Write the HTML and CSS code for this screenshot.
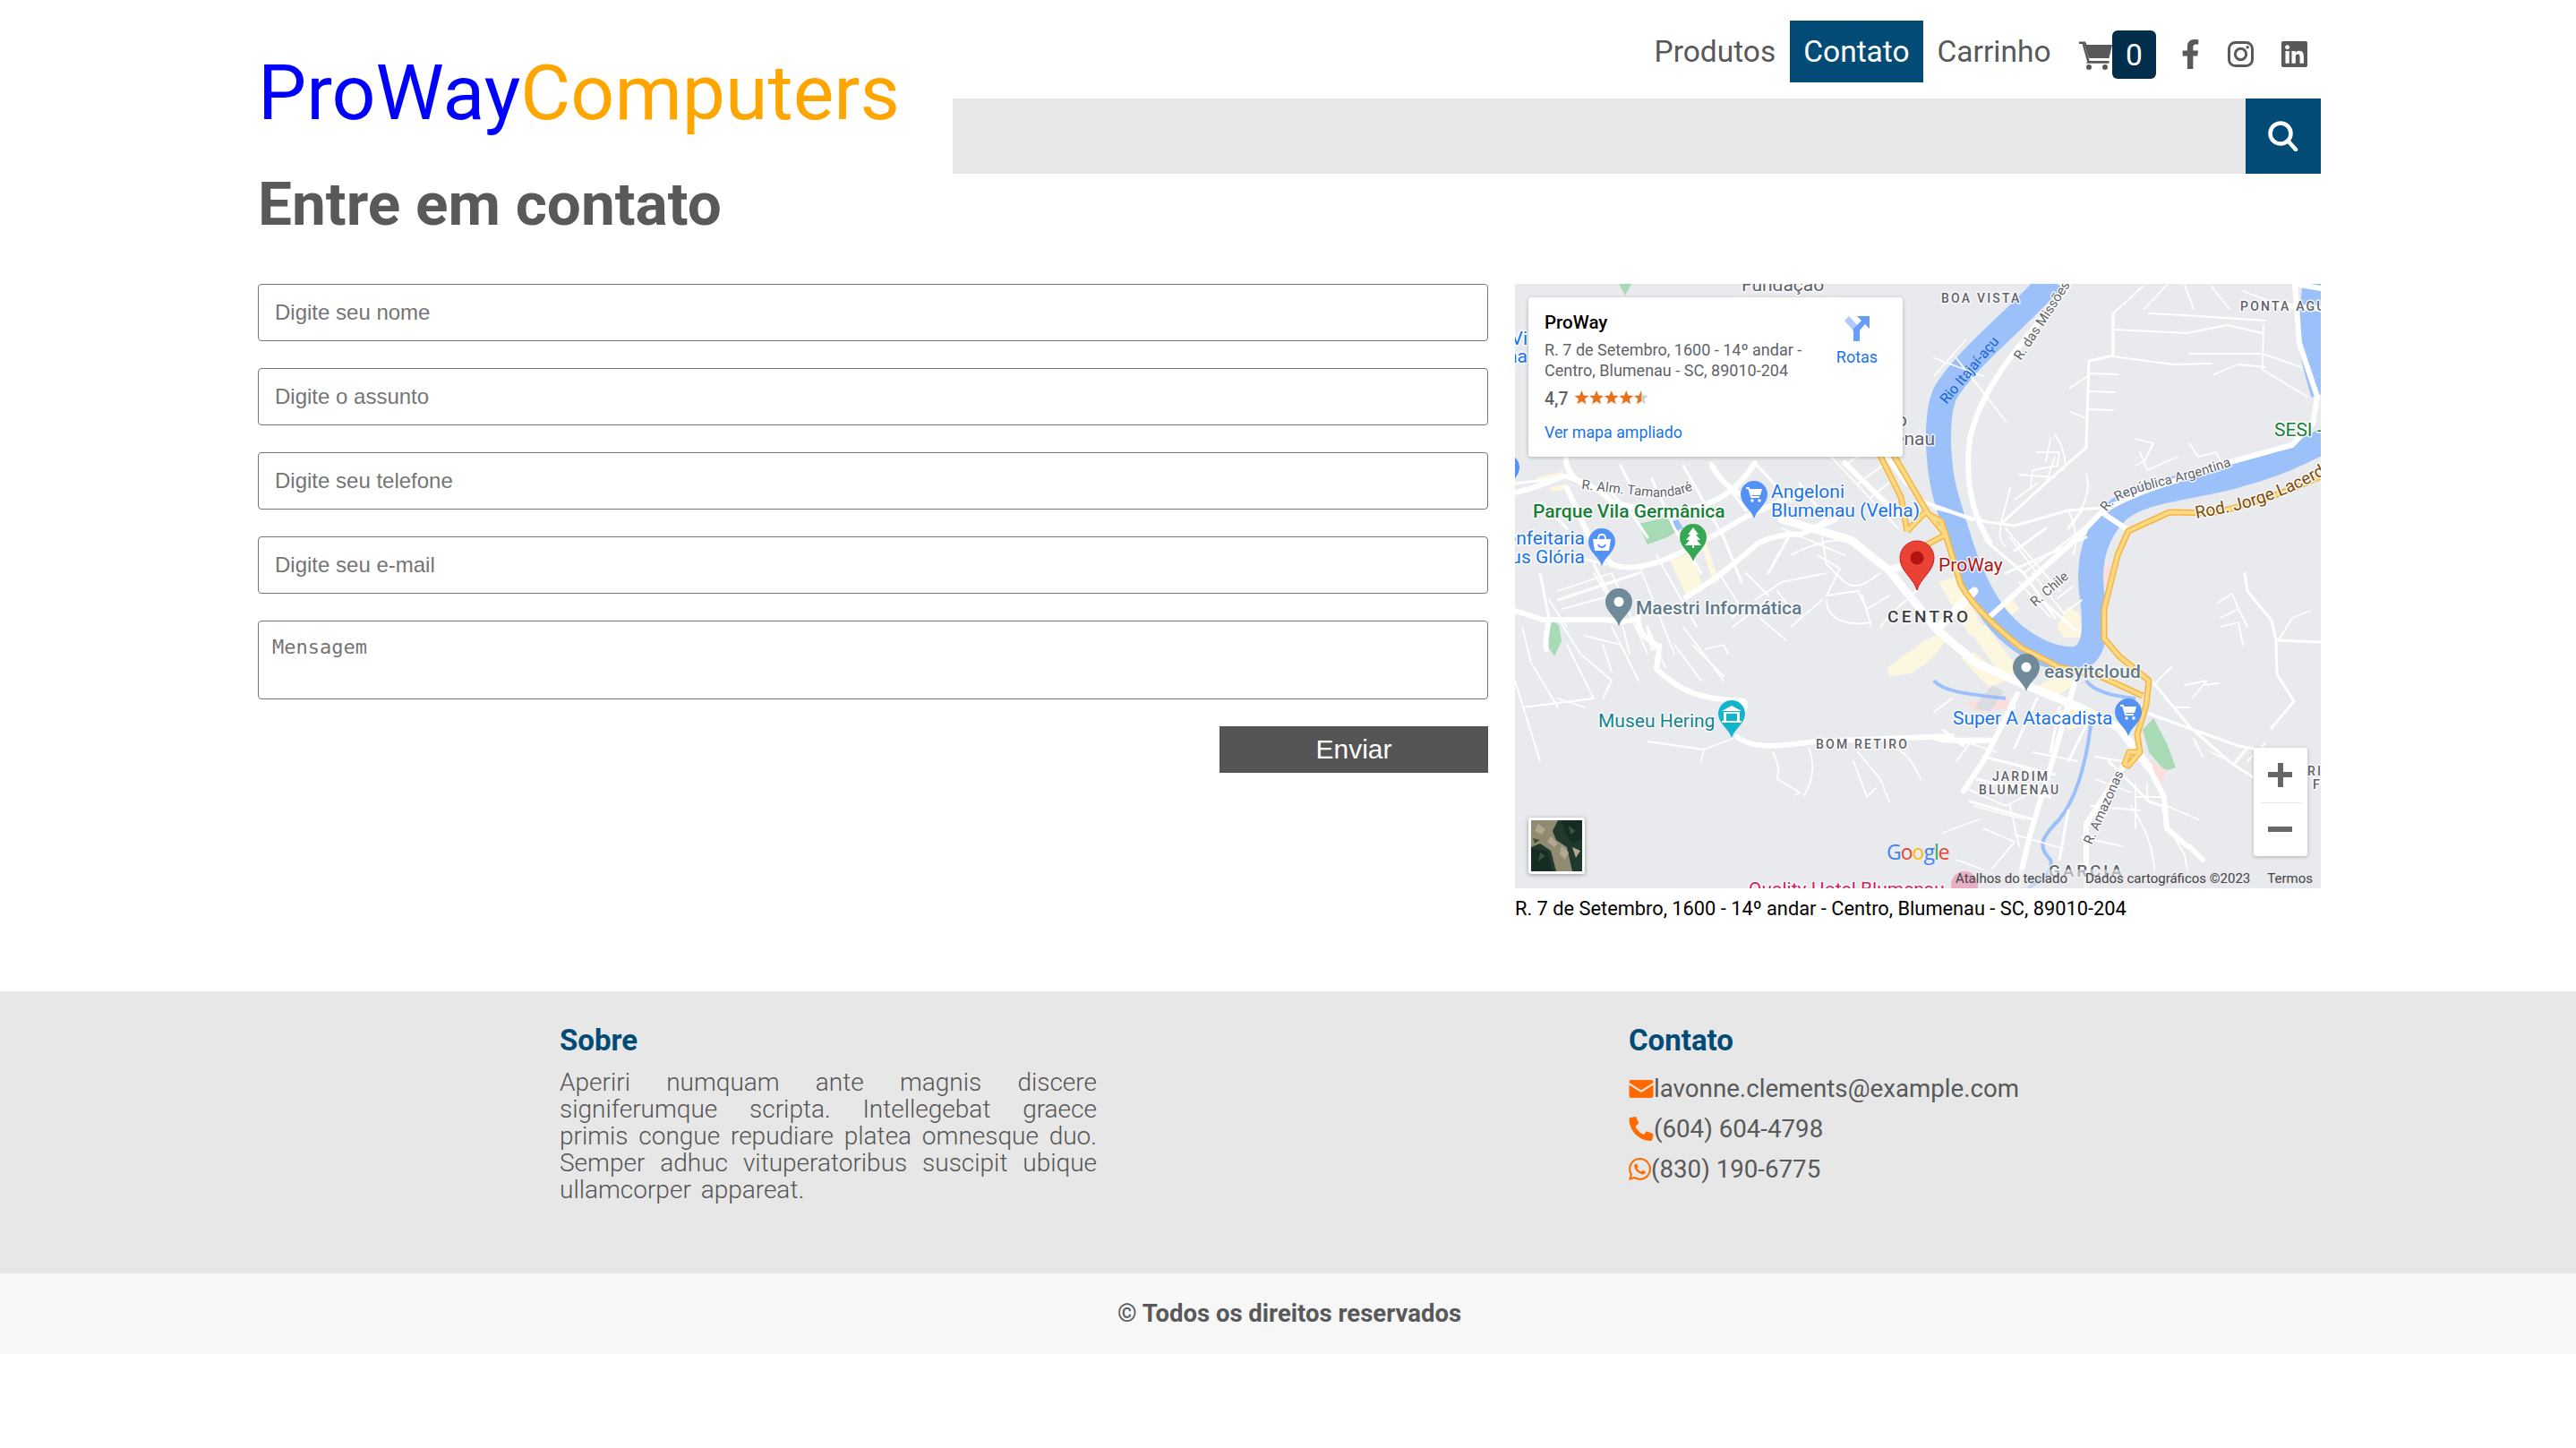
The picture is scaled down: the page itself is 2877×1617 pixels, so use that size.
FILE: index.html
```html
<!DOCTYPE html>
<html lang="pt-BR">
<head>
<meta charset="utf-8">
<title>ProWay Computers</title>
<link rel="stylesheet" href="styles.css">
</head>
<body>
<div class="wrap">
  <header class="top">
    <a class="logo"><span class="logo-a">ProWay</span><span class="logo-b">Computers</span></a>
    <div class="top-right">
      <nav class="nav">
        <a class="nav-link">Produtos</a>
        <a class="nav-link active">Contato</a>
        <a class="nav-link">Carrinho</a>
        <span class="cart">
          <svg class="cart-icon" viewBox="0 0 38 34"><path d="M1 2.5h7l1.6 3.5H38l-3.5 15H12.6l-.8 0L6.5 5H1z"/><path d="M10.5 24h24v2.8H9z"/><path d="M6.5 5l6.5 20h-2.8L4.5 5z"/><circle cx="12" cy="31" r="3"/><circle cx="30" cy="31" r="3"/></svg>
          <span class="badge">0</span>
        </span>
        <span class="social">
          <svg class="ic-f" viewBox="0 0 320 512"><path d="M279.14 288l14.22-92.66h-88.91v-60.13c0-25.35 12.42-50.06 52.24-50.06h40.42V6.26S260.43 0 225.36 0c-73.22 0-121.08 44.38-121.08 124.72v70.62H22.89V288h81.39v224h100.17V288z"/></svg>
          <svg class="ic-s" viewBox="0 0 29 29"><rect class="ig" x="1.5" y="1.5" width="26" height="26" rx="7"/><circle class="ig" cx="14.5" cy="14.5" r="6.2"/><circle cx="22.2" cy="6.8" r="1.7"/></svg>
          <svg class="ic-s" viewBox="0 0 448 448"><path transform="translate(0 -32)" d="M416 32H31.9C14.3 32 0 46.5 0 64.3v383.4C0 465.5 14.3 480 31.9 480H416c17.6 0 32-14.5 32-32.3V64.3c0-17.8-14.4-32.3-32-32.3zM135.4 416H69V202.2h66.5V416zm-33.2-243c-21.3 0-38.5-17.3-38.5-38.5S80.9 96 102.2 96c21.2 0 38.5 17.3 38.5 38.5 0 21.3-17.2 38.5-38.5 38.5zm282.1 243h-66.4V312c0-24.8-.5-56.7-34.5-56.7-34.6 0-39.9 27-39.9 54.9V416h-66.4V202.2h63.7v29.2h.9c8.9-16.8 30.6-34.5 62.9-34.5 67.2 0 79.7 44.3 79.7 101.9V416z"/></svg>
        </span>
      </nav>
      <form class="search">
        <input class="search-input" type="text" aria-label="Buscar">
        <button class="search-btn" type="button" aria-label="Buscar">
          <svg class="search-icon" viewBox="0 0 34 34"><circle cx="14" cy="14" r="11.5"/><path d="M22.5 22.5L31 32"/></svg>
        </button>
      </form>
    </div>
  </header>

  <h1 class="title">Entre em contato</h1>

  <section class="contact">
    <form class="form">
      <input class="field" type="text" placeholder="Digite seu nome">
      <input class="field" type="text" placeholder="Digite o assunto">
      <input class="field" type="text" placeholder="Digite seu telefone">
      <input class="field" type="text" placeholder="Digite seu e-mail">
      <textarea class="field area" placeholder="Mensagem"></textarea>
      <button class="send" type="button">Enviar</button>
    </form>

    <div class="map-col">
      <div class="map">
        <svg class="map-svg" viewBox="1692 317 900 675" width="900" height="675">
          <defs>
            <path id="p-tam" d="M1766 546L1845 555Q1872 556 1893 546"/>
            <path id="p-rep" d="M2353 572C2365 548 2418 546 2490 521"/>
            <path id="p-rod" d="M2453 579L2490 572C2530 563 2565 548 2600 528"/>
            <path id="pin" d="M0 27C-3 17-15 11-15 0A15 15 0 1 1 15 0C15 11 3 17 0 27Z"/>
          </defs>
          <rect class="land" x="1692" y="317" width="900" height="675"/>

          <!-- áreas -->
          <g class="park">
            <path d="M1830 585L1860 578L1878 590L1862 600L1840 608Z"/>
            <path d="M1733 693L1741 698L1744 716L1736 733L1729 722L1727 700Z"/>
            <path d="M2393 815L2405 802L2420 830L2430 857L2418 861L2400 840Z"/>
            <path d="M1808 317L1822 317L1815 330Z"/>
          </g>
          <path class="lake" d="M1866 583L1874 580L1880 590L1870 592Z"/>
          <g class="urban">
            <path d="M1865 625L1890 617L1903 660L1883 665Z"/>
            <path d="M1900 610L1906 608L1920 648L1914 652Z"/>
            <path d="M1716 533L1745 527L1748 534L1720 540Z"/>
            <path d="M1730 545L1750 540L1752 546L1733 549Z"/>
            <path d="M2108 745L2150 715L2165 708L2177 712L2155 738L2135 752L2110 755Z"/>
            <path d="M2165 650L2182 645L2215 700L2200 710Z"/>
            <path d="M2200 705L2218 698L2255 748L2238 758Z"/>
            <path d="M2297 700L2310 677L2322 685L2325 712L2305 712Z"/>
            <path d="M2190 735L2205 728L2240 760L2222 768Z"/>
            <path d="M2300 795L2325 785L2330 810L2310 815Z"/>
            <path d="M2270 770L2300 752L2320 762L2290 782Z"/>
            <path d="M2230 680L2247 667L2255 680L2240 692Z"/>
          </g>
          <g class="pink">
            <path d="M2193 785L2243 777L2245 790L2210 795Z"/>
            <path d="M2347 630L2358 632L2360 650L2350 655Z"/>
            <path d="M2397 847L2420 860L2415 875L2402 862Z"/>
          </g>
          <path class="gray-block" d="M2205 790L2225 765L2238 772L2222 795Z"/>

          <!-- rio -->
          <path class="river" d="M2292 312C2255 355 2195 400 2172 440C2160 470 2165 530 2175 560C2190 610 2200 650 2230 690C2255 720 2290 738 2318 736C2345 730 2340 690 2336 660C2332 625 2340 595 2365 570C2395 545 2450 545 2500 530C2545 518 2570 505 2600 490"/>
          <path class="river-thin" d="M2585 310L2580 365C2580 395 2588 420 2594 440"/>
          <path class="stream" d="M2160 760C2170 772 2195 775 2240 780"/>
          <path class="stream" d="M2330 760C2340 775 2370 778 2385 780"/>
          <path class="stream" d="M2335 810C2330 850 2320 890 2300 915C2280 935 2275 945 2290 960C2295 975 2275 985 2265 992"/>

          <!-- ruas finas -->
          <g class="r4">
            <path d="M2393 320L2360 350M2420 318L2395 345M2440 318L2450 345M2470 320L2490 345M2505 325L2545 340M2400 350L2440 352L2530 358"/>
            <path d="M2360 368L2443 372L2487 363L2527 372"/>
            <path d="M2528 363L2527 413L2577 443M2445 395L2527 395L2570 410"/>
            <path d="M2360 398L2427 407L2470 406M2473 418L2500 407L2530 410"/>
            <path d="M2333 417L2365 418M2332 437L2362 438M2330 457L2360 458M2312 433L2332 420M2312 460L2330 467"/>
            <path d="M2295 485C2305 500 2310 520 2303 525M2290 490L2285 515M2295 510L2285 540"/>
            <path d="M2275 505L2300 505L2298 520L2270 525L2268 545M2255 530L2295 533M2250 558L2275 540"/>
            <path d="M2385 490L2405 495L2395 515L2385 520M2390 505L2398 525L2432 510M2445 495L2455 510L2475 505L2480 515"/>
            <path d="M2160 420L2195 380M2185 400L2240 470M2160 400L2215 420M2245 545C2240 570 2225 600 2240 610"/>
            <path d="M2330 530C2335 545 2330 565 2310 590M2310 570C2320 590 2320 610 2315 620"/>
            <path d="M2290 630L2330 595M2260 640L2340 580M2300 660L2240 590M2245 600L2275 640"/>
            <path d="M2270 640L2305 685M2255 650L2290 690M2298 668L2315 655M2305 685L2325 670"/>
            <path d="M2045 510L2120 590M2060 520L2095 495M2075 540L2105 518M2090 555L2115 535"/>
            <path d="M2000 620C2020 610 2045 600 2060 605M1990 590L2060 620M2035 600L2040 630L2060 650C2075 660 2085 650 2100 640"/>
            <path d="M2030 620L2055 635L2040 665L2075 660L2085 680L2110 665M2080 665L2090 700M2100 700C2115 680 2130 670 2140 660"/>
            <path d="M1960 670L1990 650L2040 640M1985 660L2000 680M1935 700L1975 670M1965 690L1995 715M2000 700L2035 670"/>
            <path d="M1920 640L1945 680L1935 690M1950 640L1975 665"/>
            <path d="M1880 700L1925 760M1870 720L1900 760M1905 725L1925 720L1930 730"/>
            <path d="M1740 690L1765 730L1800 760L1790 780M1750 720L1780 780L1700 790M1700 700L1710 740L1740 790"/>
            <path d="M1692 760L1720 850M1740 780L1770 790"/>
            <path d="M1780 640L1810 690L1820 730M1800 640L1840 730M1830 630L1870 730M1850 620L1895 700M1740 660L1800 640M1745 680L1800 665M1730 670L1750 700"/>
            <path d="M1800 700L1830 760M1770 710L1810 720M1790 720L1800 750"/>
            <path d="M1840 700L1860 745M1890 720L1925 755"/>
            <path d="M1840 828L1903 837L1900 850M1903 837L1935 825"/>
            <path d="M1980 840C1990 860 1985 865 1985 870L2010 885L2005 888M2020 835C2030 860 2020 880 2015 888M2070 850L2085 890L2095 880M2075 840L2100 870L2110 895"/>
            <path d="M2110 835C2130 835 2140 860 2145 870M2040 670C2040 690 2060 700 2090 695"/>
            <path d="M2160 795L2180 780M2185 850L2200 830L2230 840M2195 880L2240 900L2260 890M2205 900L2260 915M2240 850L2290 870M2235 875L2280 880M2245 900L2255 945M2270 840L2320 850"/>
            <path d="M2250 932L2305 948M2215 925L2250 940L2225 970M2170 930L2210 915M2185 960L2225 975"/>
            <path d="M2340 845L2370 850M2340 870L2380 885M2335 900L2390 905M2325 935L2370 945M2385 890L2415 890M2398 875L2398 890M2385 875L2385 925"/>
            <path d="M2420 900L2455 915M2420 920L2440 955L2445 985M2380 900C2400 930 2410 960 2405 992"/>
            <path d="M2477 673L2493 663L2500 680L2480 690M2500 680L2510 700M2480 700L2500 695L2505 720M2545 715L2560 690L2580 682"/>
            <path d="M2440 765L2465 760L2448 780M2460 765L2478 763M2425 745L2405 765"/>
            <path d="M2430 790L2445 790M2470 840L2490 850M2450 825L2460 845M2510 850L2530 830"/>
          </g>

          <!-- ruas médias -->
          <g class="r3">
            <path d="M2360 350V397L2333 403C2332 440 2331 470 2330 500L2303 523L2270 553L2237 583"/>
            <path d="M2160 567L2220 583L2250 587L2310 570L2347 567"/>
            <path d="M2507 640L2510 660L2537 693L2542 715L2592 717M2542 715L2543 753L2562 783L2537 813"/>
            <path d="M2403 760L2447 813L2493 853L2517 868M2400 797L2500 833L2517 836M2495 853L2510 835"/>
            <path d="M1840 700L1845 725L1855 720L1850 747"/>
            <path d="M2217 603L2260 640L2295 690M2282 672L2320 705"/>
            <path d="M2330 600L2240 640M2250 615L2285 590M2310 590L2325 570"/>
            <path d="M1692 540L1750 533M1793 545L1820 570L1840 600M1720 560L1750 590M1810 520L1820 540M1845 535L1870 590L1900 640M1880 520L1925 600L1945 650M1910 517L1950 570M1960 517L2000 560"/>
            <path d="M1740 617L1793 630M1780 630L1800 670M1740 670L1800 650L1830 640M1720 640L1730 690"/>
            <path d="M2010 540L2040 580L2015 595M2000 595L1975 640"/>
            <path d="M2193 830L2227 827L2250 790M2170 815L2193 833M2215 845L2295 865M2208 870L2290 890M2200 895L2270 915"/>
            <path d="M2300 790L2290 840M2275 780L2250 835M2335 800L2310 850"/>
            <path d="M2310 905L2300 960M2355 850L2400 895L2415 900L2420 920"/>
          </g>

          <!-- ruas largas -->
          <g class="r2">
            <path d="M2310 320C2280 360 2215 420 2200 490C2195 530 2200 570 2222 605"/>
            <path d="M2563 317L2568 383L2588 443L2583 473L2560 497L2487 517C2440 535 2390 545 2347 572"/>
            <path d="M2347 572L2320 600L2223 688"/>
            <path d="M2347 572L2377 592"/>
            <path d="M1692 550C1720 545 1745 530 1750 532C1775 540 1790 550 1800 560C1830 570 1870 575 1900 565C1930 555 1945 540 1960 517"/>
            <path d="M1800 630C1830 642 1870 625 1950 577L2010 550"/>
            <path d="M1883 667C1910 650 1925 640 1963 607C1975 600 2000 595 2010 597L2050 580"/>
            <path d="M1750 500C1745 520 1755 535 1775 545M1800 630L1775 600L1750 545"/>
            <path d="M1692 682L1723 692H1793C1810 695 1825 695 1830 688M1730 692C1728 705 1725 715 1727 725"/>
            <path d="M1830 693C1830 715 1850 715 1853 725L1850 747C1880 775 1900 780 1947 783C1950 785 1950 792 1945 797"/>
            <path d="M1940 823C1955 835 1980 835 2027 828L2180 822"/>
            <path d="M1912 520C1920 535 1935 550 1960 560"/>
            <path d="M2317 763L2293 847L2267 933L2253 992"/>
            <path d="M2373 853L2330 920V992"/>
            <path d="M2253 775L2217 847L2193 883"/>
            <path d="M2160 823C2175 830 2200 825 2227 827"/>
            <path d="M2400 857L2417 890L2420 925L2443 945M2445 945L2460 960"/>
            <path d="M2563 317L2592 322M2540 340L2592 345"/>
            <path d="M2107 510L2130 540"/>
            <path d="M2060 517L2120 575"/>
          </g>
          <g class="r1">
            <path d="M1990 580L2067 603L2110 637L2163 703L2207 740L2257 763L2323 790L2367 813L2400 857"/>
            <path class="r-thin" d="M2147 560L2203 580"/>
            <path d="M2110 637L2147 625M2163 703L2205 660"/>
          </g>

          <!-- rodovia -->
          <g class="hwy">
            <path d="M2098 505L2123 555L2130 593M2113 505L2153 573L2173 597L2190 653C2205 680 2235 705 2257 723L2300 745L2345 755L2393 777"/>
            <path d="M2600 528C2560 548 2510 565 2470 573L2423 572L2377 593L2365 620L2350 680V713L2367 733L2400 760L2397 787L2387 820L2390 840L2377 855L2373 853L2378 840L2390 840"/>
            <path d="M2130 593L2150 572L2168 582L2173 597L2145 612"/>
          </g>
          <g class="hwy-fill">
            <path d="M2098 505L2123 555L2130 593M2113 505L2153 573L2173 597L2190 653C2205 680 2235 705 2257 723L2300 745L2345 755L2393 777"/>
            <path d="M2600 528C2560 548 2510 565 2470 573L2423 572L2377 593L2365 620L2350 680V713L2367 733L2400 760L2397 787L2387 820L2390 840L2377 855L2373 853L2378 840L2390 840"/>
            <path d="M2130 593L2150 572L2168 582L2173 597L2145 612"/>
          </g>

          <!-- rótulos -->
          <text class="t t-gray" x="1945" y="325">Fundação</text>
          <text class="t t-gray" x="1940" y="348">Universidade</text>
          <text class="t-area" x="2168" y="338">BOA VISTA</text>
          <text class="t-area" x="2502" y="347">PONTA AGU</text>
          <text class="t-road" transform="translate(2257 403) rotate(-57)">R. das Missões</text>
          <text class="t-river" transform="translate(2174 452) rotate(-50)">Rio Itajaí-açu</text>
          <text class="t t-green" x="2540" y="487">SESI -</text>
          <text class="t-road"><textPath href="#p-rep">R. República Argentina</textPath></text>
          <text class="t-rod"><textPath href="#p-rod">Rod. Jorge Lacerda</textPath></text>
          <text class="t-road"><textPath href="#p-tam">R. Alm. Tamandaré</textPath></text>
          <text class="t t-green t-b" x="1712" y="578">Parque Vila Germânica</text>
          <text class="t t-blue" x="1978" y="556">Angeloni</text>
          <text class="t t-blue" x="1978" y="577">Blumenau (Velha)</text>
          <text class="t t-blue t-end" x="1770" y="608">Confeitaria</text>
          <text class="t t-blue t-end" x="1770" y="629">Deus Glória</text>
          <text class="t t-blue t-end" x="1706" y="385">Vi</text>
          <text class="t t-blue t-end" x="1706" y="405">na</text>
          <text class="t t-gray t-end" x="2161" y="497">Blumenau</text>
          <text class="t t-gray t-end" x="2130" y="476">o</text>
          <text class="t t-slate" x="1827" y="686">Maestri Informática</text>
          <text class="t-center" x="2108" y="695">CENTRO</text>
          <text class="t t-red" x="2165" y="638">ProWay</text>
          <text class="t-road" transform="translate(2273 678) rotate(-41)">R. Chile</text>
          <text class="t t-slate" x="2283" y="757">easyitcloud</text>
          <text class="t t-blue" x="2181" y="809">Super A Atacadista</text>
          <text class="t t-teal" x="1785" y="812">Museu Hering</text>
          <text class="t-area" x="2028" y="836">BOM RETIRO</text>
          <text class="t-area" x="2225" y="872">JARDIM</text>
          <text class="t-area" x="2210" y="887">BLUMENAU</text>
          <text class="t-road" transform="translate(2336 944) rotate(-66)">R. Amazonas</text>
          <text class="t-area" x="2577" y="866">RI</text>
          <text class="t-area" x="2583" y="881">F</text>
          <text class="t-garcia" x="2288" y="979">GARCIA</text>
          <text class="t t-pink" x="1953" y="1000">Quality Hotel Blumenau</text>
          <circle class="pink-pin" cx="2194" cy="988" r="15"/>

          <text class="g-logo" x="2107" y="960"><tspan class="g-b">G</tspan><tspan class="g-r">o</tspan><tspan class="g-y">o</tspan><tspan class="g-b">g</tspan><tspan class="g-g">l</tspan><tspan class="g-r">e</tspan></text>

          <!-- marcadores -->
          <g transform="translate(1682 522)"><use href="#pin" class="m-blue"/></g>
          <g transform="translate(1959 552)">
            <use href="#pin" class="m-blue"/>
            <path class="m-ink-s" d="M-9-7h3l3 10h9"/><path class="m-ink" d="M-5-6H9L7 1H-3Z"/><circle class="m-ink" cx="-2" cy="7" r="1.7"/><circle class="m-ink" cx="6" cy="7" r="1.7"/>
          </g>
          <g transform="translate(1789 605)">
            <use href="#pin" class="m-blue"/>
            <path class="m-ink" d="M-10-3H10L8 10H-8Z"/><path class="m-ink-s" d="M-4-3C-4-10 4-10 4-3"/><path class="m-blue-s" d="M-4 3C-3 7 3 7 4 3"/>
          </g>
          <g transform="translate(1891 600)">
            <use href="#pin" class="m-green"/>
            <path class="m-ink" d="M0-11L6-3H3L8 3H4L9 9H1V12H-1V9H-9L-4 3H-8L-3-3H-6Z"/>
          </g>
          <g transform="translate(1808 672)"><use href="#pin" class="m-slate"/><circle class="m-ink" r="5.5"/></g>
          <g transform="translate(2263 745)"><use href="#pin" class="m-slate"/><circle class="m-ink" r="5.5"/></g>
          <g transform="translate(1934 797)">
            <use href="#pin" class="m-teal"/>
            <path class="m-ink" d="M0-9L11-3H-11ZM-9-2H9V8H11V10H-11V8H-9ZM-6 0V8H6V0Z"/>
            <text class="m-m" x="0" y="6.5">M</text>
          </g>
          <g transform="translate(2377 795)">
            <use href="#pin" class="m-blue"/>
            <path class="m-ink-s" d="M-9-7h3l3 10h9"/><path class="m-ink" d="M-5-6H9L7 1H-3Z"/><circle class="m-ink" cx="-2" cy="7" r="1.7"/><circle class="m-ink" cx="6" cy="7" r="1.7"/>
          </g>
          <g transform="translate(2141 623)">
            <path class="m-red" d="M0 36C-4 22-19 15-19 0A19 19 0 1 1 19 0C19 15 4 22 0 36Z"/>
            <circle class="m-red-dot" r="7.5"/>
          </g>
        </svg>

        <div class="card">
          <div class="card-text">
            <div class="card-name">ProWay</div>
            <div class="card-addr">R. 7 de Setembro, 1600 - 14º andar -<br>Centro, Blumenau - SC, 89010-204</div>
            <div class="card-rate">
              <span>4,7</span>
              <svg class="stars" viewBox="0 0 84 18">
                <defs><linearGradient id="half"><stop offset="50%" stop-color="#e7711b"/><stop offset="50%" stop-color="#d0d0d0"/></linearGradient></defs>
                <path class="star" d="M8.5 1L10.7 6.5L16.5 6.9L12 10.6L13.5 16.3L8.5 13.2L3.5 16.3L5 10.6L.5 6.9L6.3 6.5Z"/>
                <path class="star" transform="translate(16.6 0)" d="M8.5 1L10.7 6.5L16.5 6.9L12 10.6L13.5 16.3L8.5 13.2L3.5 16.3L5 10.6L.5 6.9L6.3 6.5Z"/>
                <path class="star" transform="translate(33.2 0)" d="M8.5 1L10.7 6.5L16.5 6.9L12 10.6L13.5 16.3L8.5 13.2L3.5 16.3L5 10.6L.5 6.9L6.3 6.5Z"/>
                <path class="star" transform="translate(49.8 0)" d="M8.5 1L10.7 6.5L16.5 6.9L12 10.6L13.5 16.3L8.5 13.2L3.5 16.3L5 10.6L.5 6.9L6.3 6.5Z"/>
                <path class="star-half" transform="translate(66.4 0)" d="M8.5 1L10.7 6.5L16.5 6.9L12 10.6L13.5 16.3L8.5 13.2L3.5 16.3L5 10.6L.5 6.9L6.3 6.5Z"/>
              </svg>
            </div>
            <a class="card-link">Ver mapa ampliado</a>
          </div>
          <div class="card-dir">
            <svg class="dir-icon" viewBox="0 0 28 28"><path class="dir-l" d="M0 5L5 0L17 13L12 19Z"/><path class="dir-d" d="M10 28V14L19 5L14 0H28V14L23 9L17 16V28Z"/></svg>
            <span class="dir-text">Rotas</span>
          </div>
        </div>

        <div class="sat">
          <svg class="sat-img" viewBox="0 0 57 57">
            <rect class="sat-a" width="57" height="57"/>
            <path class="sat-b" d="M0 0H30L24 12L28 22L40 30L46 57H28L22 34L10 26L0 30Z"/>
            <path class="sat-c" d="M34 0H57V20L46 26L38 14Z"/>
            <path class="sat-c" d="M0 32L18 34L24 57H0Z"/>
            <path class="sat-d" d="M8 4L16 10L12 16L4 12ZM22 18L30 26L26 30L18 24ZM34 28L42 36L38 44L32 38ZM46 30L55 34L50 42Z"/>
            <path class="sat-e" d="M10 36L16 40L8 46ZM42 6L50 12L44 16ZM2 20L10 22L4 26Z"/>
          </svg>
        </div>

        <div class="zoom-ctl">
          <button class="zoom-btn" type="button" aria-label="Aumentar"><span class="plus"></span></button>
          <button class="zoom-btn" type="button" aria-label="Diminuir"><span class="minus"></span></button>
        </div>

        <div class="attr">
          <span class="attr-a">Atalhos do teclado</span>
          <span class="attr-b">Dados cartográficos ©2023</span>
          <span class="attr-c">Termos</span>
        </div>
      </div>
      <p class="addr">R. 7 de Setembro, 1600 - 14º andar - Centro, Blumenau - SC, 89010-204</p>
    </div>
  </section>
</div>

<footer class="foot">
  <div class="foot-main">
    <div class="foot-about">
      <h2 class="foot-h">Sobre</h2>
      <p class="foot-p">Aperiri numquam ante magnis discere signiferumque scripta. Intellegebat graece primis congue repudiare platea omnesque duo. Semper adhuc vituperatoribus suscipit ubique ullamcorper appareat.</p>
    </div>
    <div class="foot-contact">
      <h2 class="foot-h">Contato</h2>
      <div class="foot-line">
        <svg class="fi fi-mail" viewBox="0 0 27 20"><path d="M2 0H25A2 2 0 0 1 27 2V3L13.5 11.5L0 3V2A2 2 0 0 1 2 0Z"/><path d="M0 5.5L13.5 14L27 5.5V18A2 2 0 0 1 25 20H2A2 2 0 0 1 0 18Z"/></svg><span>lavonne.clements@example.com</span>
      </div>
      <div class="foot-line">
        <svg class="fi fi-phone" viewBox="0 0 512 512"><path transform="translate(512 0) scale(-1 1)" d="M493.4 24.6l-104-24c-11.3-2.6-22.9 3.3-27.5 13.9l-48 112c-4.2 9.8-1.4 21.3 6.9 28l60.6 49.6c-36 76.7-98.9 140.5-177.2 177.2l-49.6-60.6c-6.8-8.3-18.2-11.1-28-6.9l-112 48C3.9 366.5-2 378.1.6 389.4l24 104C27.7 504.2 37.3 512 48 512c256.1 0 464-207.5 464-464 0-11.2-7.7-20.9-18.6-23.4z"/></svg><span>(604) 604-4798</span>
      </div>
      <div class="foot-line">
        <svg class="fi fi-wa" viewBox="0 32 448 448"><path d="M380.9 97.1C339 55.1 283.2 32 223.9 32c-122.4 0-222 99.6-222 222 0 39.1 10.2 77.3 29.6 111L0 480l117.7-30.9c32.4 17.7 68.9 27 106.1 27h.1c122.3 0 224.1-99.6 224.1-222 0-59.3-25.2-115-67.1-157zm-157 341.6c-33.2 0-65.7-8.9-94-25.7l-6.7-4-69.8 18.3L72 359.2l-4.4-7c-18.5-29.4-28.2-63.3-28.2-98.2 0-101.7 82.8-184.5 184.6-184.5 49.3 0 95.6 19.2 130.4 54.1 34.8 34.9 56.2 81.2 56.1 130.5 0 101.8-84.9 184.6-186.6 184.6zm101.2-138.2c-5.5-2.8-32.8-16.2-37.9-18-5.1-1.9-8.8-2.8-12.5 2.8-3.7 5.6-14.3 18-17.6 21.8-3.2 3.7-6.5 4.2-12 1.4-32.6-16.3-54-29.1-75.5-66-5.7-9.8 5.7-9.1 16.3-30.3 1.8-3.7.9-6.9-.5-9.7-1.4-2.8-12.5-30.1-17.1-41.2-4.5-10.8-9.1-9.3-12.5-9.5-3.2-.2-6.9-.2-10.6-.2-3.7 0-9.7 1.4-14.8 6.9-5.1 5.6-19.4 19-19.4 46.3 0 27.3 19.9 53.7 22.6 57.4 2.8 3.7 39.1 59.7 94.8 83.8 35.2 15.2 49 16.5 66.6 13.9 10.7-1.6 32.8-13.4 37.4-26.4 4.6-13 4.6-24.1 3.2-26.4-1.3-2.5-5-3.9-10.5-6.6z"/></svg><span>(830) 190-6775</span>
      </div>
    </div>
  </div>
  <div class="foot-copy">© Todos os direitos reservados</div>
</footer>
</body>
</html>
```

FILE: styles.css
```css
* { box-sizing: border-box; }
html, body { margin: 0; padding: 0; background: #fff; }
body { font-family: Roboto, "Liberation Sans", sans-serif; color: #58595b; }

.wrap { padding: 0 285px 0 288px; }

/* cabeçalho */
.top { display: flex; padding-top: 23px; height: 194px; }
.logo { width: 776px; padding-top: 31px; font-family: Roboto, "Liberation Sans", sans-serif; font-size: 86px; line-height: 100px; white-space: nowrap; }
.logo-a { color: #0000ff; }
.logo-b { color: #ffa500; }
.top-right { flex: 1; display: flex; flex-direction: column; gap: 18px; }
.nav { display: flex; justify-content: flex-end; align-items: center; height: 69px; }
.nav-link { height: 69px; padding: 0 15.5px; font-size: 33.5px; line-height: 69px; color: #58595b; }
.nav-link.active { background: #024b77; color: #fff; }
.cart { display: flex; align-items: center; margin-left: 15px; margin-top: 7px; }
.cart-icon { width: 38px; height: 34px; fill: #58595b; }
.badge { width: 49px; height: 54px; border-radius: 6px; background: #012f4b; color: #fff; font-size: 33.5px; line-height: 56px; text-align: center; }
.social { display: flex; align-items: center; margin-left: 28px; margin-right: 15px; margin-top: 5px; gap: 31px; }
.ic-f { width: 21px; height: 33px; fill: #58595b; }
.ic-s { width: 29px; height: 29px; fill: #58595b; }
.ig { fill: none; stroke: #58595b; stroke-width: 3; }
.search { display: flex; height: 84px; }
.search-input { flex: 1; border: 0; background: #e7e7e7; }
.search-btn { width: 84px; border: 0; padding: 0; background: #024b77; display: flex; align-items: center; justify-content: center; }
.search-icon { width: 34px; height: 34px; fill: none; stroke: #fff; stroke-width: 4.5; stroke-linecap: round; }

.title { margin: 0; height: 123px; font-size: 67.5px; line-height: 67px; font-weight: 700; color: #58595b; }

/* contato */
.contact { display: flex; gap: 30px; align-items: flex-start; }
.form { width: 1374px; display: flex; flex-direction: column; gap: 30px; align-items: flex-end; }
.field { display: block; width: 100%; height: 64px; padding: 0 18px; border: 1px solid #767676; border-radius: 4px; background: #fff; font-family: "Liberation Sans", Arial, sans-serif; font-size: 24px; }
.field::placeholder { color: #757575; opacity: 1; }
.area { height: 88px; padding: 16px 15px; font-family: "DejaVu Sans Mono", monospace; font-size: 22px; resize: none; }
.send { width: 300px; height: 52px; border: 0; background: #555; color: #fff; font-family: "Liberation Sans", Arial, sans-serif; font-size: 30px; }

.map-col { width: 900px; }
.map { position: relative; width: 900px; height: 675px; overflow: hidden; }
.map-svg { display: block; }
.addr { margin: 8px 0 0; font-size: 21.8px; line-height: 30px; color: #000; }

/* mapa */
.land { fill: #e8eaed; }
.park { fill: #a8dab5; }
.lake { fill: #9cc0f9; }
.urban { fill: #fef7e0; }
.pink { fill: #fbdfdc; }
.gray-block { fill: #dadce0; }
.river { fill: none; stroke: #9cc0f9; stroke-width: 28; }
.river-thin { fill: none; stroke: #9cc0f9; stroke-width: 26; }
.stream { fill: none; stroke: #9cc0f9; stroke-width: 4; }
.r1, .r2, .r3, .r4 { fill: none; stroke: #fff; stroke-linecap: round; stroke-linejoin: round; }
.r1 { stroke-width: 9; }
.r1 .r-thin { stroke-width: 4; }
.r2 { stroke-width: 6; }
.r3 { stroke-width: 3; }
.r4 { stroke-width: 1.8; }
.hwy { fill: none; stroke: #f5b53f; stroke-width: 7; stroke-linejoin: round; }
.hwy-fill { fill: none; stroke: #fdd985; stroke-width: 4; stroke-linejoin: round; }

.t, .t-area, .t-road, .t-rod, .t-center, .t-garcia { font-family: Roboto, sans-serif; paint-order: stroke; stroke: #fff; stroke-width: 3px; stroke-linejoin: round; stroke-opacity: .85; }
.t { font-size: 21px; }
.t-end { text-anchor: end; }
.t-b { font-weight: 500; }
.t-gray { fill: #5f6368; }
.t-blue { fill: #1a73e8; }
.t-green { fill: #188038; }
.t-red { fill: #b31412; }
.t-teal { fill: #12858f; }
.t-slate { fill: #5f7a8a; font-weight: 500; }
.t-pink { fill: #d81b60; }
.t-area { font-size: 14px; font-weight: 500; letter-spacing: 2.2px; fill: #5f6368; }
.t-center { font-size: 19px; font-weight: 500; letter-spacing: 3.4px; fill: #3c4043; }
.t-garcia { font-size: 19px; font-weight: 500; letter-spacing: 2.8px; fill: #5f6368; }
.t-road { font-size: 15px; fill: #5f6368; }
.t-river { font-family: Roboto, sans-serif; font-size: 16px; fill: #1967d2; }
.t-rod { font-size: 19px; fill: #7a4a12; }
.pink-pin { fill: #e8588f; }
.g-logo { font-family: "Open Sans", sans-serif; font-size: 23px; font-weight: 500; letter-spacing: -1px; }
.g-b { fill: #4285f4; }
.g-r { fill: #ea4335; }
.g-y { fill: #fbbc05; }
.g-g { fill: #34a853; }
.m-blue { fill: #5491f5; }
.m-green { fill: #34a853; }
.m-slate { fill: #708a99; }
.m-teal { fill: #12b5cb; }
.m-red { fill: #ea4335; stroke: #c5221f; stroke-width: 1; }
.m-red-dot { fill: #b31412; }
.m-ink { fill: #fff; }
.m-ink-s { fill: none; stroke: #fff; stroke-width: 1.8; }
.m-blue-s { fill: none; stroke: #5491f5; stroke-width: 1.8; }
.m-m { font-family: Roboto, sans-serif; font-size: 9px; font-weight: 700; text-anchor: middle; fill: #12b5cb; }

.card { position: absolute; left: 15px; top: 15px; width: 418px; height: 178px; display: flex; justify-content: space-between; padding: 17px 18px; background: #fff; border-radius: 3px; box-shadow: 0 1px 4px rgba(0,0,0,.25); font-family: Roboto, sans-serif; }
.card-name { font-size: 20.5px; line-height: 23px; font-weight: 500; color: #000; }
.card-addr { margin-top: 8px; font-size: 18px; line-height: 22.5px; color: #5f6368; white-space: nowrap; }
.card-rate { display: flex; align-items: center; gap: 6px; margin-top: 6px; height: 28px; font-size: 19.5px; font-weight: 500; color: #5f6368; }
.stars { width: 84px; height: 18px; margin-top: -2px; }
.star { fill: #e7711b; }
.star-half { fill: url(#half); }
.card-link { display: block; margin-top: 13px; font-size: 17.8px; line-height: 22px; color: #1a73e8; }
.card-dir { display: flex; flex-direction: column; align-items: center; gap: 8px; padding-top: 4px; width: 62px; margin-right: 2px; }
.dir-icon { width: 28px; height: 28px; }
.dir-l { fill: #aecbfa; }
.dir-d { fill: #669df6; }
.dir-text { font-size: 18px; line-height: 20px; color: #1a73e8; }

.sat { position: absolute; left: 15px; top: 596px; width: 63px; height: 63px; border: 3px solid #fff; border-radius: 3px; box-shadow: 0 1px 5px rgba(0,0,0,.35); background: #fff; }
.sat-img { display: block; width: 57px; height: 57px; }
.sat-a { fill: #1f3a2d; }
.sat-b { fill: #8f8a70; }
.sat-c { fill: #142c22; }
.sat-d { fill: #b3a88f; }
.sat-e { fill: #3b4f3c; }

.zoom-ctl { position: absolute; left: 825px; top: 518px; width: 60px; height: 121px; display: flex; flex-direction: column; background: #fff; border-radius: 3px; box-shadow: 0 1px 4px rgba(0,0,0,.25); }
.zoom-btn { position: relative; flex: 1; border: 0; padding: 0; background: none; }
.zoom-btn + .zoom-btn::before { content: ""; position: absolute; left: 8px; right: 7px; top: 0; height: 1px; background: #e6e6e6; }
.plus, .minus { position: absolute; left: 16px; width: 27px; height: 6px; background: #666; }
.plus { top: 27px; }
.plus::after { content: ""; position: absolute; left: 10.5px; top: -10.5px; width: 6px; height: 27px; background: #666; }
.minus { top: 27px; }

.attr { position: absolute; right: 0; bottom: 0; height: 21px; display: flex; font-family: Roboto, sans-serif; font-size: 15px; line-height: 21px; color: #444; }
.attr-a, .attr-b, .attr-c { background: rgba(232,234,237,.6); }
.attr-a { padding: 0 11px 0 8px; }
.attr-b { padding: 0 9px 0 9px; }
.attr-c { margin-left: 2px; padding: 0 9px 0 8px; }

/* rodapé */
.foot { margin-top: 77px; }
.foot-main { position: relative; height: 315px; background: #e7e7e7; display: flex; padding: 0 0 0 625px; }
.foot-about { width: 600px; }
.foot-contact { margin-left: 594px; }
.foot-h { margin: 0; padding-top: 33px; font-size: 33px; line-height: 44px; font-weight: 700; color: #024b77; }
.foot-p { margin: 10px 0 0; font-size: 28px; line-height: 30px; font-weight: 300; word-spacing: 4px; text-align: justify; color: #555; }
.foot-contact .foot-h { margin-bottom: 9px; }
.foot-line { display: flex; align-items: center; height: 45px; font-size: 27.7px; color: #58595b; white-space: nowrap; }
.fi { fill: #ff6a00; flex: none; }
.fi-mail { width: 28px; height: 20px; }
.fi-phone { width: 28px; height: 27px; }
.fi-wa { width: 25px; height: 25px; }
.foot-copy { height: 90px; background: #f7f7f7; text-align: center; font-size: 27.5px; line-height: 90px; font-weight: 700; color: #58595b; padding-left: 3px; }
```
